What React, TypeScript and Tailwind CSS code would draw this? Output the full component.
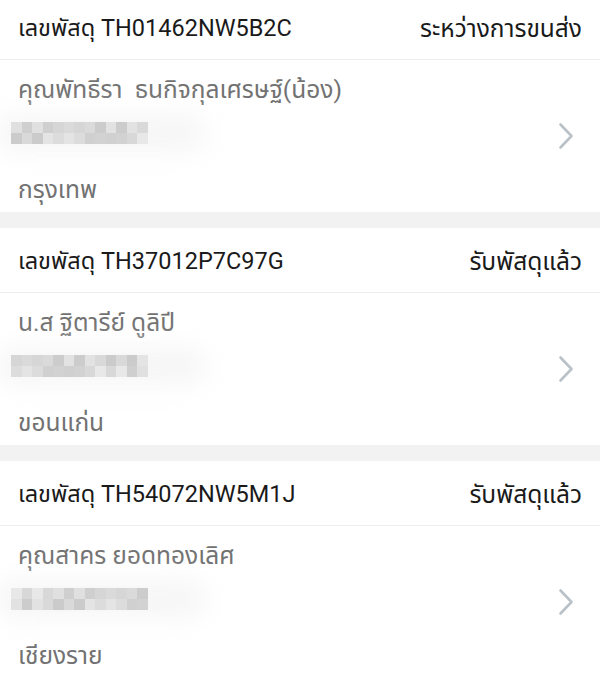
const SHADES = [
  'bg-[#e0e0e0]', 'bg-[#d6d6d6]', 'bg-[#cccccc]', 'bg-[#d9d9d9]', 'bg-[#e4e4e4]', 'bg-[#d0d0d0]', 'bg-[#d8d8d8]',
  'bg-[#cfcfcf]', 'bg-[#dadada]', 'bg-[#e2e2e2]', 'bg-[#cbcbcb]', 'bg-[#dcdcdc]', 'bg-[#d2d2d2]', 'bg-[#e8e8e8]',
];

const parcels = [
  { no: 'TH01462NW5B2C', status: 'ระหว่างการขนส่ง', name: 'คุณพัทธีรา\u00a0\u00a0ธนกิจกุลเศรษฐ์(น้อง)', city: 'กรุงเทพ', seed: 0 },
  { no: 'TH37012P7C97G', status: 'รับพัสดุแล้ว', name: 'น.ส ฐิตารีย์ ดูลิปี', city: 'ขอนแก่น', seed: 5 },
  { no: 'TH54072NW5M1J', status: 'รับพัสดุแล้ว', name: 'คุณสาคร ยอดทองเลิศ', city: 'เชียงราย', seed: 9 },
];

function Pixelated({ seed }: { seed: number }) {
  const cells = Array.from({ length: 26 }, (_, i) => SHADES[(i * 7 + seed * 3 + (i >> 2)) % SHADES.length]);
  return (
    <div className="relative h-[22px] w-[200px]">
      <div className="absolute -left-1 -top-2 h-[38px] w-[210px] rounded-full bg-[#f6f6f6] blur-md" />
      <div className="relative ml-[11px] grid h-[22px] w-[137px] grid-cols-[repeat(13,1fr)] grid-rows-2 blur-[0.6px]">
        {cells.map((c, i) => (
          <div key={i} className={c} />
        ))}
      </div>
    </div>
  );
}

function Chevron() {
  return (
    <svg width="16" height="28" viewBox="0 0 16 28" fill="none" className="mr-[26px]">
      <path d="M2.5 2.5 L13.5 14 L2.5 25.5" stroke="#b9c2c8" strokeWidth="2.6" strokeLinecap="round" strokeLinejoin="round" />
    </svg>
  );
}

export default function App() {
  return (
    <div className="h-[673px] w-[600px] overflow-hidden bg-[#f2f2f2] font-['Roboto','Noto_Sans','Noto_Sans_Thai',sans-serif]">
      <div className="-mt-[5px] flex flex-col gap-[16px]">
        {parcels.map((p) => (
          <div key={p.no} className="bg-white">
            <div className="flex h-[65px] items-center justify-between border-b border-[#eeeeee] px-[18px] pt-[4px] text-[23.5px] text-[#1a1a1a]">
              <span>เลขพัสดุ {p.no}</span>
              <span className="text-[24.5px]">{p.status}</span>
            </div>
            <div className="flex h-[152px] items-center justify-between">
              <div className="flex flex-col text-[24.5px] leading-[30px] text-[#727272]">
                <div className="pl-[18px] pt-[8px]">{p.name}</div>
                <div className="mt-[17px]">
                  <Pixelated seed={p.seed} />
                </div>
                <div className="mt-[31px] pl-[18px]">{p.city}</div>
              </div>
              <Chevron />
            </div>
          </div>
        ))}
      </div>
    </div>
  );
}
